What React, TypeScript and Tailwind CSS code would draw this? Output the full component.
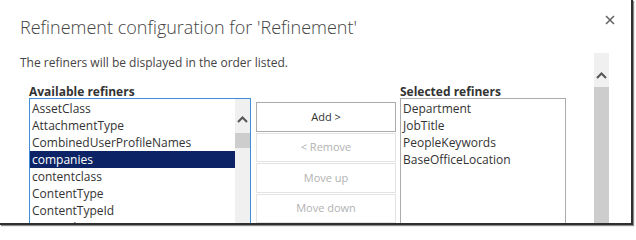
const available = [
  'AssetClass',
  'AttachmentType',
  'CombinedUserProfileNames',
  'companies',
  'contentclass',
  'ContentType',
  'ContentTypeId',
  'Created',
];

const selected = ['Department', 'JobTitle', 'PeopleKeywords', 'BaseOfficeLocation'];

function Chevron() {
  return (
    <svg width="11" height="7" viewBox="0 0 11 7">
      <path d="M1 6 L5.5 1.5 L10 6" fill="none" stroke="#555" strokeWidth="2" />
    </svg>
  );
}

export default function App() {
  return (
    <div
      className="w-[636px] h-[228px] overflow-hidden bg-white"
      style={{ fontFamily: '"Open Sans", "Noto Sans", sans-serif' }}
    >
      <div className="w-[633px] h-[225px] flex flex-col border-r-2 border-b-2 border-[#2f2f2f] shadow-[1px_1px_1px_#8a8a8a] overflow-hidden">
        {/* header */}
        <div className="h-[53px] shrink-0 flex items-start justify-between">
          <h1 className="pl-[20px] pt-[14px] text-[18px] font-light text-[#444] leading-[26px]">
            Refinement configuration for 'Refinement'
          </h1>
          <button className="mt-[15px] mr-[16px] w-[10px] h-[10px] flex items-center justify-center">
            <svg width="10" height="10" viewBox="0 0 10 10">
              <path d="M1 1 L9 9 M9 1 L1 9" stroke="#666" strokeWidth="1.6" />
            </svg>
          </button>
        </div>

        {/* body */}
        <div className="flex-1 flex min-h-0">
          <div className="flex-1 min-w-0 pl-[20px]">
            <p className="text-[12px] leading-[20px] text-[#444]">
              The refiners will be displayed in the order listed.
            </p>

            <div className="flex mt-[9px] pl-[9px]">
              {/* available */}
              <div className="w-[222px] shrink-0">
                <div className="text-[12px] font-bold text-[#333] leading-[20px] h-[16px]">Available refiners</div>
                <div className="h-[130px] border border-[#3f8fd6] flex overflow-hidden">
                  <ul className="flex-1 pt-[1px]">
                    {available.map((item) => (
                      <li
                        key={item}
                        className={
                          item === 'companies'
                            ? 'h-[17px] leading-[17px] text-[12px] pl-[2px] bg-[#0c2465] text-white'
                            : 'h-[17px] leading-[17px] text-[12px] pl-[2px] text-[#333]'
                        }
                      >
                        {item}
                      </li>
                    ))}
                  </ul>
                  <div className="w-[15px] bg-[#f0f0f0] flex flex-col items-center pt-[17px]">
                    <Chevron />
                    <div className="mt-[10px] w-[15px] h-[15px] bg-[#cdcdcd]" />
                  </div>
                </div>
              </div>

              {/* buttons */}
              <div className="w-[140px] ml-[5px] pt-[20px] flex flex-col gap-[1px] shrink-0">
                <button className="h-[29.5px] border border-[#ababab] bg-white text-[11px] text-[#333]">Add &gt;</button>
                <button className="h-[29.5px] border border-[#e3e3e3] bg-white text-[11px] text-[#b2b2b2]">&lt; Remove</button>
                <button className="h-[29.5px] border border-[#e3e3e3] bg-white text-[11px] text-[#b2b2b2]">Move up</button>
                <button className="h-[29.5px] border border-[#e3e3e3] bg-white text-[11px] text-[#b2b2b2]">Move down</button>
              </div>

              {/* selected */}
              <div className="w-[166px] ml-[4px] shrink-0">
                <div className="text-[12px] font-bold text-[#333] leading-[20px] h-[16px]">Selected refiners</div>
                <ul className="h-[130px] border border-[#ababab] pt-[1px]">
                  {selected.map((item) => (
                    <li key={item} className="h-[17px] leading-[17px] text-[12px] pl-[2px] text-[#333]">
                      {item}
                    </li>
                  ))}
                </ul>
              </div>
            </div>
          </div>

          {/* page scrollbar */}
          <div className="w-[15px] mr-[22px] shrink-0 bg-[#cdcdcd] flex flex-col">
            <div className="h-[34px] pt-[19px] bg-[#f0f0f0] flex justify-center">
              <Chevron />
            </div>
          </div>
        </div>
      </div>
    </div>
  );
}
